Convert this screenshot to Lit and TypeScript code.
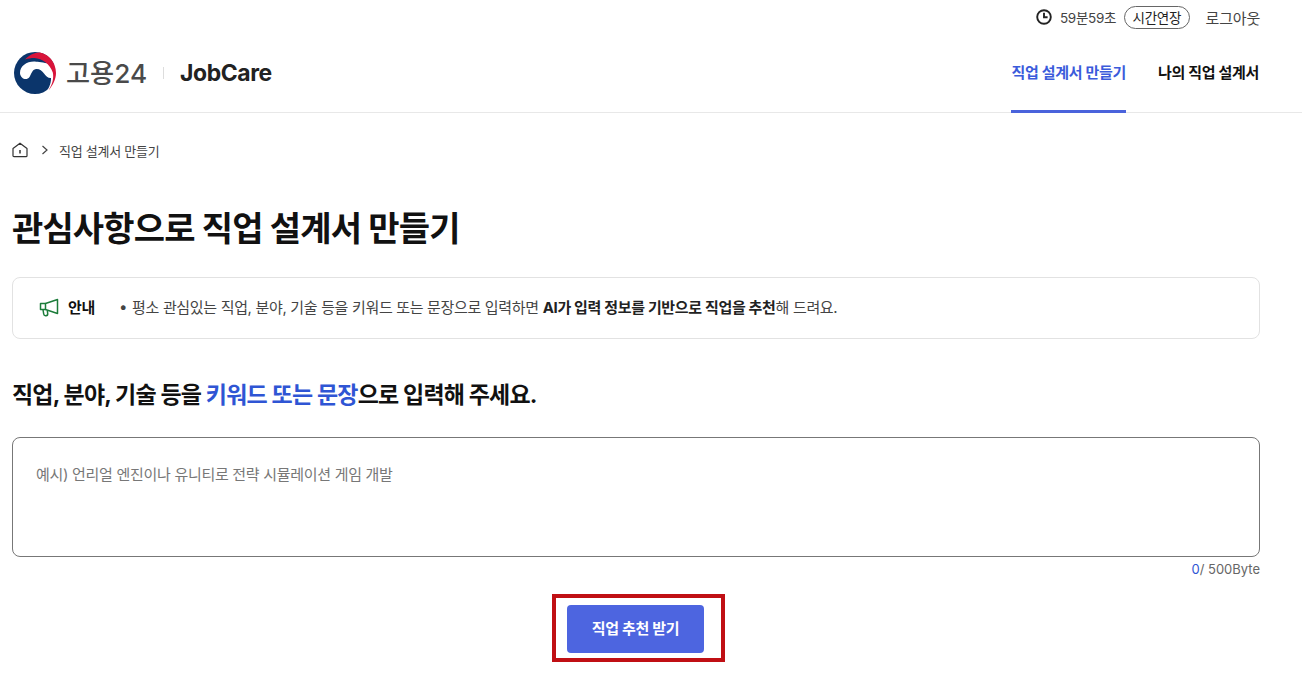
import { LitElement, html, css } from "lit";
import { customElement } from "lit/decorators.js";

@customElement("app-root")
export class AppRoot extends LitElement {
  static styles = css`
    :host {
      display: block;
      font-family: Inter, "Noto Sans CJK KR", sans-serif;
      color: #111;
      background: #fff;
      height: 679px;
      overflow: hidden;
    }
    * { box-sizing: border-box; }
    .util {
      height: 34px;
      padding: 0 42px 0 0;
      display: flex;
      justify-content: flex-end;
      align-items: center;
      font-size: 13.5px;
      color: #444;
    }
    .clock { display: block; margin-right: 8px; }
    .time { letter-spacing: -0.3px; margin-right: 8px; }
    .extend {
      height: 23px;
      padding: 0 7.5px;
      border: 1px solid #666;
      border-radius: 12px;
      display: flex;
      align-items: center;
      font-size: 13.5px;
      letter-spacing: -0.3px;
      color: #222;
      margin-right: 16px;
    }
    .logout { font-size: 15px; letter-spacing: -0.2px; }
    .head {
      height: 79px;
      display: flex;
      align-items: stretch;
      justify-content: space-between;
      padding: 0 43px 0 13px;
      border-bottom: 1px solid #e8e8e8;
    }
    .brand { display: flex; align-items: center; }
    .emblem { display: block; margin-right: 9px; }
    .wordmark { font-size: 26.2px; color: #4a4a4a; font-weight: 500; padding-bottom: 3px; }
    .sep { width: 1px; height: 12px; background: #ddd; margin: 0 16px; }
    .jobcare { font-size: 22.9px; font-weight: 700; color: #222; letter-spacing: -0.4px; }
    nav { display: flex; gap: 32px; }
    .tab {
      display: flex;
      align-items: center;
      font-size: 15px;
      font-weight: 700;
      letter-spacing: -0.3px;
      height: 79px;
      padding-bottom: 2px;
      border-bottom: 3px solid transparent;
    }
    .tab.on { color: #3b5bdb; border-bottom-color: #4a63dc; }
    main { padding: 0 42px 0 12px; }
    .crumb {
      display: flex;
      align-items: center;
      height: 20px;
      margin-top: 27px;
      font-size: 13px;
      letter-spacing: -0.25px;
      color: #444;
    }
    .crumb svg { display: block; }
    .chev { margin: 0 10px 0 13px; }
    h1 {
      margin: 46px 0 0;
      font-size: 34px;
      line-height: 46px;
      font-weight: 700;
      letter-spacing: -0.85px;
      color: #111;
    }
    .notice {
      margin-top: 25px;
      height: 62px;
      border: 1px solid #e2e2e2;
      border-radius: 8px;
      display: flex;
      align-items: center;
      padding: 0 0 4px 26px;
      font-size: 15px;
      letter-spacing: -0.33px;
      color: #444;
    }
    .notice svg { display: block; margin: 3px 9px 0 0; }
    .notice .lbl { font-weight: 700; color: #111; margin-right: 24px; }
    .notice .dot { margin-right: 5px; }
    .notice b { color: #222; font-weight: 700; }
    h2 {
      margin: 40px 0 0;
      font-size: 23px;
      line-height: 32px;
      font-weight: 700;
      letter-spacing: -0.8px;
      color: #111;
    }
    h2 span { color: #2f55d4; }
    .area {
      margin-top: 26px;
      height: 120px;
      border: 1px solid #777;
      border-radius: 8px;
      padding: 27px 23px;
      font-size: 15px;
      line-height: 20px;
      letter-spacing: -0.3px;
      color: #777;
    }
    .count {
      text-align: right;
      font-size: 13px;
      line-height: 18px;
      margin-top: 3px;
      color: #666;
    }
    .count span { color: #2f55d4; }
    .actions { display: flex; justify-content: center; margin-top: 27px; }
    .mark { position: relative; margin-left: -1px; }
    .mark::after {
      content: "";
      position: absolute;
      inset: -11px -21px -9px -15px;
      border: 4px solid #c00f14;
      pointer-events: none;
    }
    .btn {
      display: flex;
      align-items: center;
      justify-content: center;
      width: 137px;
      height: 48px;
      padding: 0 0 3px;
      background: #4d65e0;
      border: 0;
      border-radius: 4px;
      color: #fff;
      font: 700 15px Inter, "Noto Sans CJK KR", sans-serif;
      letter-spacing: -0.3px;
    }
  `;

  render() {
    return html`
      <div class="util">
        <svg class="clock" width="16" height="16" viewBox="0 0 16 16" fill="none" stroke="#222" stroke-width="1.9">
          <circle cx="8" cy="8" r="6.8"></circle>
          <path d="M8 3.800v4.500h3.600"></path>
        </svg>
        <span class="time">59분59초</span>
        <span class="extend">시간연장</span>
        <span class="logout">로그아웃</span>
      </div>
      <header class="head">
        <div class="brand">
          <svg class="emblem" width="44" height="44" viewBox="0 0 44 44">
            <circle cx="22" cy="22" r="21" fill="#0b356b"></circle>
            <path d="M7 22C7 15 13.500 10.500 21 10.500 25 10.500 44 14 44 14V30L36 42 31 42.500C35.500 39 38.200 33 38 27 35.500 27.500 33 25 31 22.500 29 19.500 26 17.500 23 18 19 18.700 18.500 23 16.500 26 14.500 28.800 11 28.500 9 26.500 7.700 25.200 7 23.500 7 22Z" fill="#fff"></path>
            <path d="M12 8.500C16 4.500 21 1.300 27 1.500 36 3 43 12 43 22 43 28 40 34 35.500 39.500 39.500 33 41 27 39.800 21.500 37 13 29 7.500 21.500 7 18 7 15 7.500 12 8.500Z" fill="#d8143a"></path>
          </svg>
          <span class="wordmark">고용24</span>
          <span class="sep"></span>
          <span class="jobcare">JobCare</span>
        </div>
        <nav>
          <a class="tab on">직업 설계서 만들기</a>
          <a class="tab">나의 직업 설계서</a>
        </nav>
      </header>
      <main>
        <div class="crumb">
          <svg width="16" height="16" viewBox="0 0 16 16" fill="none" stroke="#333" stroke-width="1.2" stroke-linejoin="round">
            <path d="M1 6.500 8 1.200l7 5.300v7.200a1 1 0 0 1-1 1H2a1 1 0 0 1-1-1Z"></path>
            <path d="M8 8v3.500" stroke-width="1.500"></path>
          </svg>
          <svg class="chev" width="8" height="10" viewBox="0 0 8 10" fill="none" stroke="#444" stroke-width="1.200">
            <path d="M1.500 1l4.500 4-4.500 4"></path>
          </svg>
          <span>직업 설계서 만들기</span>
        </div>
        <h1>관심사항으로 직업 설계서 만들기</h1>
        <div class="notice">
          <svg width="20" height="19" viewBox="0 0 20 19" fill="none" stroke="#1c7c3a" stroke-width="1.500" stroke-linejoin="round">
            <path d="M6.500 5.500 18.500 1.500v14L6.500 11.500Z"></path>
            <path d="M6.500 5.500H1.500v6h5"></path>
            <path d="M4 11.500l.7 4.500a2 2 0 0 0 4-.5l-.4-3.200"></path>
          </svg>
          <span class="lbl">안내</span>
          <span class="dot">•</span>
          <span>평소 관심있는 직업, 분야, 기술 등을 키워드 또는 문장으로 입력하면 <b>AI가 입력 정보를 기반으로 직업을 추천</b>해 드려요.</span>
        </div>
        <h2>직업, 분야, 기술 등을 <span>키워드 또는 문장</span>으로 입력해 주세요.</h2>
        <div class="area">예시) 언리얼 엔진이나 유니티로 전략 시뮬레이션 게임 개발</div>
        <div class="count"><span>0</span>/ 500Byte</div>
        <div class="actions">
          <div class="mark"><button class="btn">직업 추천 받기</button></div>
        </div>
      </main>
    `;
  }
}
